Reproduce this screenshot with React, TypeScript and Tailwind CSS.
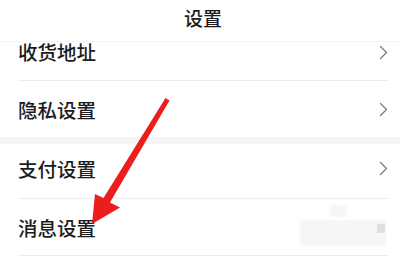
const font = { fontFamily: '"Noto Sans CJK SC", "Noto Sans", sans-serif' };

function Chevron() {
  return (
    <svg width="9" height="15" viewBox="0 0 9 15" className="shrink-0">
      <polyline points="1.5,1.5 7.5,7.5 1.5,13.5" fill="none" stroke="#7a7a7a" strokeWidth="1.3" strokeLinecap="round" strokeLinejoin="round" />
    </svg>
  );
}

function Row({ label, className, divider = true, chevron = true }: { label: string; className: string; divider?: boolean; chevron?: boolean }) {
  return (
    <div className="pl-[18px] pr-[12px]">
      <div className={`flex items-center justify-between ${divider ? "border-b border-[#ececec]" : ""} ${className}`}>
        <span className="text-[19.5px] leading-[20px] text-[#1c1c1c] font-medium">{label}</span>
        {chevron ? <Chevron /> : null}
      </div>
    </div>
  );
}

export default function App() {
  return (
    <div className="relative w-[400px] h-[258px] bg-white overflow-hidden" style={font}>
      <div className="h-[42px] flex items-center justify-center border-b border-[#f3f3f3]">
        <span className="text-[19px] font-medium text-[#1c1c1c] pl-[6px] pb-[4px]">设置</span>
      </div>

      <Row label="收货地址" className="h-[39px] pb-[18px]" />
      <Row label="隐私设置" className="h-[56px] pt-[1px]" divider={false} />
      <div className="h-[7px] bg-[#f5f5f5]" />
      <Row label="支付设置" className="h-[55px] pb-[5px]" />
      <Row label="消息设置" className="h-[57px] pt-[1px]" chevron={false} />

      {/* blurred patch over the last row */}
      <div className="absolute left-[330px] top-[205px] w-[16px] h-[12px] bg-[#f6f6f6] blur-[1px]" />
      <div className="absolute left-[300px] top-[220px] w-[86px] h-[26px] bg-[#f6f6f6] blur-[1px]" />
      <div className="absolute left-[377px] top-[224px] w-[8px] h-[9px] bg-[#dedede] blur-[0.5px]" />

      <svg className="absolute left-0 top-0" width="400" height="258" viewBox="0 0 400 258">
        <polygon
          points="165.5,98 169.5,100.5 110,202.5 120,207.5 92,224 95,194 103.5,198"
          fill="#ec1d1d"
        />
      </svg>
    </div>
  );
}
